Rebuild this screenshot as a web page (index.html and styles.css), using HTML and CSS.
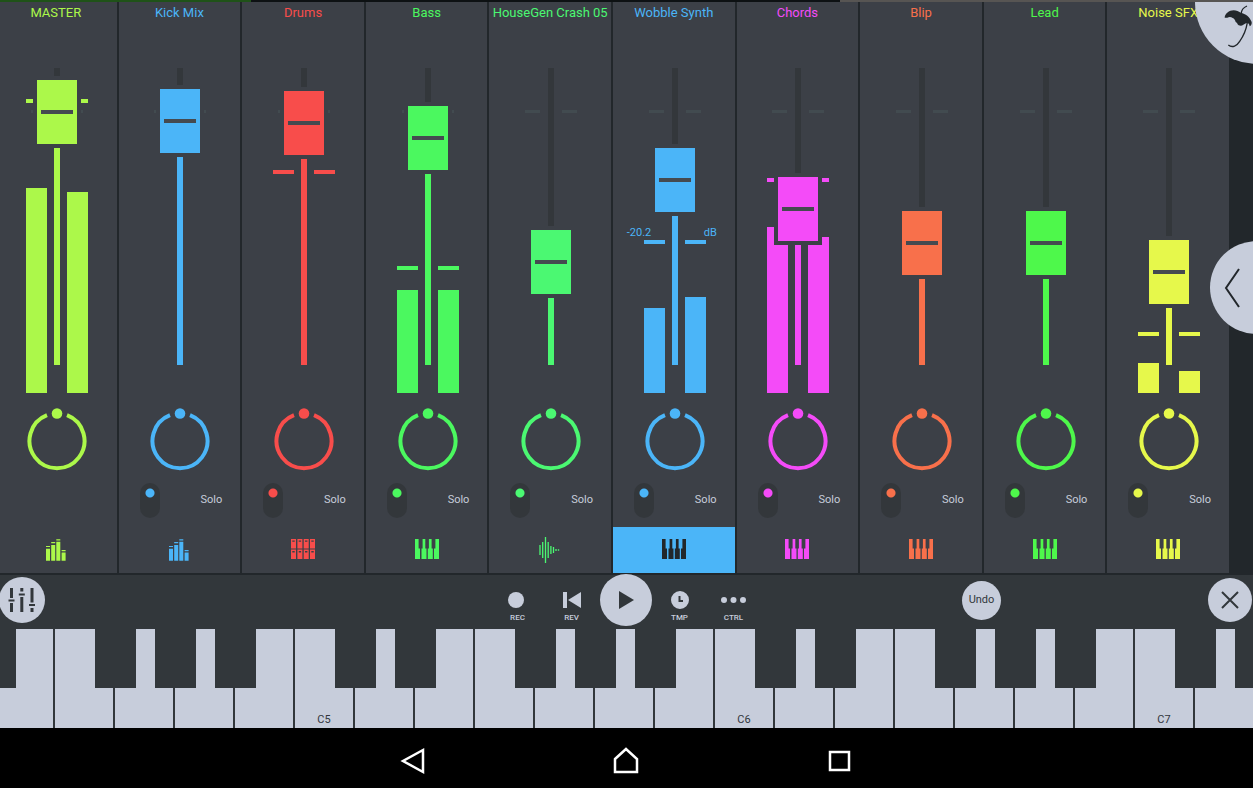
FILE: index.html
```html
<!DOCTYPE html>
<html lang="en">
<head>
    <meta charset="UTF-8">
    <meta name="viewport" content="width=device-width, initial-scale=1">
    <title>Mixer</title>
    <link rel="stylesheet" href="styles.css">
</head>
<body>

<svg class="sprite" aria-hidden="true">
    <symbol id="icon-levels" viewBox="-2 0 24 26">
        <path d="M0 9h4v1H0zM0 11.700h4v12H0zM5.200 5h4v1.300h-4zM5.200 8h4v15.700h-4zM10.300 2.200h4v1.200h-4zM10.300 4.700h4v19h-4zM15.600 13h4v1.200h-4zM15.600 15.500h4v8.200h-4z"/>
    </symbol>
    <symbol id="icon-pads" viewBox="0 0 24 26">
        <path fill-rule="evenodd" d="M0 2h5v9.500H0zm1.300 1.500v1.300h2.400V3.500zM6.400 2h5v9.500h-5zm1.300 1.500v1.300h2.400V3.500zM12.700 2h5v9.500h-5zm1.300 1.500v1.300h2.400V3.500zM19 2h5v9.500h-5zm1.300 1.500v1.300h2.400V3.500zM0 12.500h5V22H0zm1.300 1.500v1.500h2.400V14zM6.400 12.500h5V22h-5zm1.300 1.500v1.500h2.400V14zM12.700 12.500h5V22h-5zm1.300 1.500v1.500h2.400V14zM19 12.500h5V22h-5zm1.300 1.500v1.500h2.400V14z"/>
    </symbol>
    <symbol id="icon-keys" viewBox="0 0 24 26">
        <path d="M0 2h3.600v9.500H5V22H0zM7.600 2h2.700v9.500h1.200V22h-5V11.500h1.100zM13.900 2h2.700v9.500h1.200V22h-5V11.500h1.100zM20.400 2H24v20h-5V11.500h1.400z"/>
    </symbol>
    <symbol id="icon-wave" viewBox="0 0 24 26">
        <path d="M2 8v10M4.700 5v16M7.500 0v26M10.200 5v16M12.900 9v8M15.500 10v6M18 12v2M20.500 12.200v1.600" fill="none" stroke="currentColor" stroke-width="1.300"/>
    </symbol>
</svg>

<div class="top-strip"></div>

<main class="mixer" id="mixer"></main>

<button class="menu-button" aria-label="Menu">
    <svg width="30" height="45" viewBox="0 0 90 135">
        <path d="M5 41C6 29 18 19 32 19c9 0 14 4 21 7 15 3 27 12 33 28 1 6-2 12-6 13-1-6-3-9-6-10-6-1-9 3-13 5-4 4-9 4-14 2-5-3-3-8-9-10-2-6-4-10-9-12-5-4-11-4-16-1z"/>
        <path d="M54 30c1-10 8-20 18-24M73 56c-3 18-10 38-23 56-8 13-22 21-34 11" fill="none" stroke="currentColor" stroke-width="4"/>
    </svg>
</button>
<button class="panel-button" aria-label="Open panel">
    <svg width="18" height="40" viewBox="0 0 18 40"><path d="M15 1L2 20l13 19" fill="none" stroke="currentColor" stroke-width="2"/></svg>
</button>

<section class="toolbar">
    <div class="toolbar-left">
        <button class="round mixer-button" aria-label="Mixer">
            <svg width="28" height="26" viewBox="0 0 28 26">
                <path d="M2 1h3v10H2zM2 16h3v9H2zM.500 12.500h6v2h-6zM12.300 1h3v3.500h-3zM12.300 10h3v15h-3zM10.800 6.500h6v2h-6zM22.500 1h3v14.500h-3zM22.500 21h3v4h-3zM21 17h6v2h-6z"/>
            </svg>
        </button>
    </div>
    <div class="transport">
        <button class="tool">
            <svg width="28" height="20" viewBox="0 0 28 20"><circle cx="12" cy="10" r="8"/></svg>
            REC
        </button>
        <button class="tool">
            <svg width="28" height="20" viewBox="0 0 28 20"><path d="M5 2h4v16H5zM23 2v16L10 10z"/></svg>
            REV
        </button>
        <button class="round play-button" aria-label="Play">
            <svg width="18" height="20" viewBox="0 0 18 20"><path d="M2 1v18l15-9z"/></svg>
        </button>
        <button class="tool">
            <svg width="28" height="20" viewBox="0 0 28 20"><path fill-rule="evenodd" d="M14 1a9 9 0 1 0 0 18 9 9 0 0 0 0-18zM12.500 6h2v4H17v2h-4.500z"/></svg>
            TMP
        </button>
        <button class="tool">
            <svg width="28" height="20" viewBox="0 0 28 20"><circle cx="4" cy="10" r="3"/><circle cx="13.500" cy="10" r="3"/><circle cx="23" cy="10" r="3"/></svg>
            CTRL
        </button>
    </div>
    <div class="toolbar-right">
        <button class="round undo-button">Undo</button>
        <button class="round close-button" aria-label="Close">
            <svg width="18" height="18" viewBox="0 0 18 18"><path d="M1 1l16 16M17 1L1 17" fill="none" stroke="currentColor" stroke-width="2"/></svg>
        </button>
    </div>
</section>

<section class="keyboard" id="keyboard"></section>

<nav class="system-bar">
    <button aria-label="Back">
        <svg width="28" height="28" viewBox="0 0 28 28"><path d="M24 3v22L4 14z"/></svg>
    </button>
    <button aria-label="Home">
        <svg width="28" height="28" viewBox="0 0 28 28"><path d="M3 12L14 2l11 10v13H3z"/></svg>
    </button>
    <button aria-label="Recent apps">
        <svg width="28" height="28" viewBox="0 0 28 28"><path d="M5 5h19v18H5z"/></svg>
    </button>
</nav>

<script>
    // fader: 0-297, bars: left/right level, peak: peak hold position
    const channels = [
        { name: "MASTER", color: "#acf84a", fader: 253, bars: [205, 201], peak: 290, icon: "levels", master: true },
        { name: "Kick Mix", color: "#4bb5f8", fader: 244, icon: "levels" },
        { name: "Drums", color: "#f84d4b", fader: 242, bars: [0, 0], peak: 219, icon: "pads" },
        { name: "Bass", color: "#4bf85f", fader: 227, bars: [103, 103], peak: 123, icon: "keys" },
        { name: "HouseGen Crash 05", color: "#4bf872", fader: 103, icon: "wave" },
        { name: "Wobble Synth", color: "#4bb5f8", fader: 185, bars: [85, 96], peak: 149, db: "-20.2", icon: "keys", selected: true },
        { name: "Chords", color: "#f44bf8", fader: 156, bars: [166, 156], peak: 211, icon: "keys" },
        { name: "Blip", color: "#f8704b", fader: 122, icon: "keys" },
        { name: "Lead", color: "#4ef84b", fader: 122, icon: "keys" },
        { name: "Noise SFX", color: "#e6f84b", fader: 93, bars: [30, 22], peak: 57, icon: "keys" }
    ];

    function meter(level, peak) {
        return `<div class="meter">
            <div class="peak" style="margin-bottom: ${peak - level}px"></div>
            <div class="bar" style="height: ${level}px"></div>
        </div>`;
    }

    function channelHtml(ch) {
        let meters = ch.bars ? meter(ch.bars[0], ch.peak) + meter(ch.bars[1], ch.peak) : "";
        let readout = ch.db ? `<div class="readout" style="margin-bottom: ${ch.peak + 9}px"><span>${ch.db}</span><span>dB</span></div>` : "";
        let switches = ch.master ? "" : `
            <input type="checkbox" class="mute" aria-label="${ch.name} on" checked>
            <button class="solo">Solo</button>`;

        return `<section class="channel" style="--color: ${ch.color}">
            <h2>${ch.name}</h2>
            <div class="fader-area">
                <div class="meters">${meters}</div>
                <input type="range" class="fader" min="0" max="297" value="${ch.fader}" style="--level: ${ch.fader}px" aria-label="${ch.name} volume">
                ${readout}
            </div>
            <div class="knob">
                <svg width="64" height="64" viewBox="0 0 64 64">
                    <path d="M42 7.200a27.500 27.500 0 1 1-20 0" fill="none" stroke="currentColor" stroke-width="4"/>
                    <circle cx="32" cy="5.500" r="5.300"/>
                </svg>
                <input type="range" min="-50" max="50" value="0" aria-label="${ch.name} pan">
            </div>
            <div class="switches">${switches}</div>
            <button class="source ${ch.selected ? "selected" : ""}" aria-label="${ch.name} source">
                <svg width="24" height="26"><use href="#icon-${ch.icon}"></use></svg>
            </button>
        </section>`;
    }

    function drawKeyboard() {
        const notes = ["C", "D", "E", "F", "G", "A", "B"];
        let html = "";
        // 22 white keys starting from D4
        for (let i = 1; i <= 22; i++) {
            let note = notes[i % 7];
            let octave = 4 + Math.floor(i / 7);
            let hasSharp = note !== "E" && note !== "B";
            let label = note === "C" ? note + octave : "";
            html += `<div class="key">
                <button class="white" aria-label="${note}${octave}">${label}</button>
                ${hasSharp ? `<button class="black" aria-label="${note}#${octave}"></button>` : ""}
            </div>`;
        }
        document.getElementById("keyboard").innerHTML = html;
    }

    document.getElementById("mixer").innerHTML = channels.map(channelHtml).join("");
    drawKeyboard();

    document.querySelectorAll(".fader").forEach(fader => {
        fader.addEventListener("input", () => {
            fader.style.setProperty("--level", fader.value + "px");
        });
    });
</script>

</body>
</html>
```
FILE: styles.css
```css
* {
    box-sizing: border-box;
}
body {
    position: relative;
    display: flex;
    flex-direction: column;
    min-height: 100vh;
    margin: 0;
    overflow: hidden;
    background: #000;
    font-family: Roboto, "Liberation Sans", sans-serif;
    color: #c7cddb;
}
button {
    display: flex;
    align-items: center;
    justify-content: center;
    padding: 0;
    border: 0;
    background: none;
    color: inherit;
    font: inherit;
    cursor: pointer;
}
svg {
    display: block;
    fill: currentColor;
}
.sprite {
    position: absolute;
    width: 0;
    height: 0;
}
.top-strip {
    height: 2px;
    background: linear-gradient(to right, #1f5218 20%, #0d1113 20%, #0d1113 67%, #575553 67%);
}

/* mixer */
.mixer {
    display: grid;
    grid-template-columns: repeat(10, minmax(0, 1fr));
    padding-right: 24px;
    margin-left: -7px;
    background: #22272b;
    border-bottom: 2px solid #22272b;
}
.channel {
    display: flex;
    flex-direction: column;
    align-items: center;
    border-left: 2px solid #22272b;
    background: #3c4047;
    color: var(--color);
}
.channel h2 {
    height: 34px;
    margin: 0;
    font-size: 13px;
    font-weight: 400;
    line-height: 21px;
    white-space: nowrap;
}
.fader-area {
    display: grid;
    justify-items: center;
    width: 100%;
    height: 361px;
    padding-left: 2px;
    background:
        linear-gradient(to right, #424b50 15px, transparent 15px, transparent 37px, #424b50 37px) center 74px / 52px 3px no-repeat content-box;
}
.fader-area > * {
    grid-area: 1 / 1;
}
.meters {
    display: flex;
    justify-content: space-between;
    width: 62px;
    padding-bottom: 4px;
}
.meter {
    display: flex;
    flex-direction: column;
    justify-content: flex-end;
    width: 21px;
}
.peak {
    height: 4px;
    background: var(--color);
}
.bar {
    background: var(--color);
}
.fader {
    appearance: none;
    writing-mode: vertical-lr;
    direction: rtl;
    width: 40px;
    height: 361px;
    margin: 0;
    background: linear-gradient(to top, var(--color) var(--level), #33373b var(--level)) center / 6px 297px no-repeat;
    cursor: pointer;
}
.fader::-webkit-slider-thumb {
    appearance: none;
    width: 40px;
    height: 64px;
    background: linear-gradient(#454a50, #454a50) center / 32px 4px no-repeat var(--color);
    box-shadow: 0 0 0 4px #3c4047;
}
.readout {
    display: flex;
    align-self: end;
    justify-content: space-between;
    width: 90px;
    margin-right: 6px;
    font-size: 11px;
    line-height: 12px;
}
.knob {
    display: grid;
    width: 64px;
    height: 64px;
    margin: 11px 0 0 2px;
}
.knob > * {
    grid-area: 1 / 1;
}
.knob input {
    width: 64px;
    margin: 0;
    opacity: 0;
    cursor: pointer;
}
.switches {
    display: flex;
    align-items: center;
    justify-content: space-between;
    width: 100%;
    height: 35px;
    margin-top: 11px;
    padding: 0 18px 0 21px;
}
.mute {
    appearance: none;
    width: 20px;
    height: 35px;
    margin: 0;
    border-radius: 10px;
    background: radial-gradient(circle at 10px 25px, var(--color) 4px, transparent 5px) #33373b;
    cursor: pointer;
}
.mute:checked {
    background: radial-gradient(circle at 10px 10px, var(--color) 4px, transparent 5px) #33373b;
}
.solo {
    padding-bottom: 2px;
    color: #c7cddb;
    font-size: 11px;
}
.source {
    width: 100%;
    height: 46px;
    margin-top: 9px;
}
.source.selected {
    background: var(--color);
    color: #22272b;
}

/* buttons over the mixer edge */
.menu-button {
    position: absolute;
    top: 2px;
    right: -4px;
    align-items: flex-start;
    justify-content: flex-start;
    width: 62px;
    height: 62px;
    padding: 2px 0 0 28px;
    border-radius: 0 0 0 62px;
    background: #c7cddb;
    color: #22272b;
}
.panel-button {
    position: absolute;
    top: 241px;
    right: -51px;
    justify-content: flex-start;
    width: 94px;
    height: 93px;
    padding-left: 14px;
    border-radius: 50%;
    background: #c7cddb;
    color: #22272b;
}

/* toolbar */
.toolbar {
    display: grid;
    grid-template-columns: 1fr auto 1fr;
    align-items: center;
    height: 54px;
    padding-bottom: 4px;
    background: #32373b;
}
.round {
    border-radius: 50%;
    background: #c7cddb;
    color: #32373b;
}
.mixer-button {
    width: 46px;
    height: 46px;
    margin-left: -1px;
}
.transport {
    display: flex;
    align-items: center;
    height: 50px;
    padding-right: 2px;
}
.tool {
    flex-direction: column;
    gap: 2px;
    width: 54px;
    padding-top: 14px;
    font-size: 8px;
    font-weight: 500;
    line-height: 12px;
}
.play-button {
    width: 52px;
    height: 52px;
    margin: 0 1px;
}
.toolbar-right {
    display: flex;
    align-items: center;
    justify-content: flex-end;
    gap: 207px;
}
.undo-button {
    width: 39px;
    height: 39px;
    padding-bottom: 2px;
    font-size: 11px;
}
.close-button {
    width: 44px;
    height: 44px;
    margin-right: 1px;
}

/* keyboard */
.keyboard {
    display: grid;
    grid-template-columns: repeat(22, 1fr);
    height: 99px;
    margin-left: -67px;
    background: #32373b;
}
.key {
    position: relative;
    border-left: 2px solid #32373b;
}
.white {
    align-items: flex-end;
    width: 100%;
    height: 99px;
    background: #c7cddb;
    color: #32373b;
    font-size: 11px;
    line-height: 16px;
}
.black {
    position: absolute;
    top: 0;
    right: -23px;
    z-index: 1;
    width: 41px;
    height: 59px;
    background: #32373b;
}

/* system bar */
.system-bar {
    display: flex;
    align-items: center;
    justify-content: center;
    gap: 185px;
    height: 60px;
    padding: 6px 2px 0 0;
    color: #fff;
}
.system-bar svg {
    fill: none;
    stroke: currentColor;
    stroke-width: 2.5;
}
```
